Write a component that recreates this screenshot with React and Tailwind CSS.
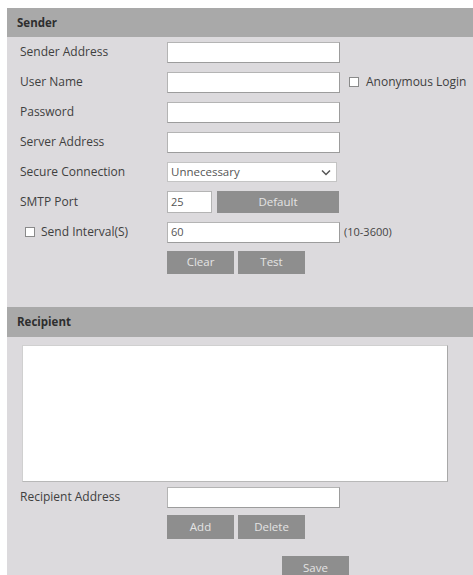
import React from 'react';

const font = { fontFamily: '"Open Sans", "Noto Sans", sans-serif' };

const Label = ({ children }) => (
  <div className="w-[160px] pl-[13px] text-[12px] text-[#404040]">{children}</div>
);

const TextInput = ({ value = '', w = 'w-[173px]' }) => (
  <div className={`${w} h-[21px] bg-white border border-[#b4b4b4] border-b-[#9c9c9c] border-r-[#9c9c9c] flex items-center px-[3px] text-[11px] text-[#555]`}>
    {value}
  </div>
);

const Btn = ({ children, w = 'w-[67px]', h = 'h-[23px]' }) => (
  <div className={`${w} ${h} bg-[#8e8e8e] flex items-center justify-center text-[11.5px] text-[#e4e4e4]`}>
    {children}
  </div>
);

const Box = () => <span className="inline-block w-[10px] h-[10px] bg-white border border-[#8a8a8a]" />;

const Header = ({ children, h = 'h-[29px]' }) => (
  <div className={`${h} bg-[#a9a9a9] flex items-center pl-[10px] text-[11.5px] font-bold text-[#2e2e2e]`}>
    {children}
  </div>
);

const Row = ({ children }) => <div className="h-[30px] flex items-center">{children}</div>;

export default function App() {
  return (
    <div className="w-[473px] h-[575px] bg-white pt-[8px] pl-[7px] overflow-hidden" style={font}>
      <div className="h-full bg-[#dcdadd]">
        <Header>Sender</Header>
        <Row>
          <Label>Sender Address</Label>
          <TextInput />
        </Row>
        <Row>
          <Label>User Name</Label>
          <TextInput />
          <div className="ml-[9px] flex items-center gap-[7px] text-[12px] text-[#404040]">
            <Box />
            Anonymous Login
          </div>
        </Row>
        <Row>
          <Label>Password</Label>
          <TextInput />
        </Row>
        <Row>
          <Label>Server Address</Label>
          <TextInput />
        </Row>
        <Row>
          <Label>Secure Connection</Label>
          <div className="w-[170px] h-[20px] bg-white border border-[#c4c4c4] flex items-center justify-between pl-[3px] pr-[5px] text-[11.5px] text-[#555]">
            Unnecessary
            <svg width="10" height="7" viewBox="0 0 10 7" fill="none" stroke="#555" strokeWidth="1.5">
              <path d="M1 1.5 L5 5.5 L9 1.5" />
            </svg>
          </div>
        </Row>
        <Row>
          <Label>SMTP Port</Label>
          <div className="w-[45px] h-[22px] bg-white border border-[#b4b4b4] flex items-center px-[3px] text-[11px] text-[#555]">25</div>
          <div className="ml-[5px]">
            <Btn w="w-[122px]" h="h-[22px]">Default</Btn>
          </div>
        </Row>
        <Row>
          <div className="w-[160px] pl-[18px] flex items-center gap-[6px] text-[12px] text-[#404040]">
            <Box />
            Send Interval(S)
          </div>
          <TextInput value="60" />
          <span className="ml-[4px] text-[11px] text-[#444]">(10-3600)</span>
        </Row>
        <Row>
          <div className="w-[160px]" />
          <div className="flex gap-[4px]">
            <Btn>Clear</Btn>
            <Btn>Test</Btn>
          </div>
        </Row>
        <div className="h-[30px]" />
        <Header h="h-[30px]">Recipient</Header>
        <div className="mt-[8px] ml-[15px] w-[426px] h-[137px] bg-white border border-[#d0d0d0] border-r-[#a8a8a8] border-b-[#b8b8b8]" />
        <Row>
          <Label>Recipient Address</Label>
          <TextInput />
        </Row>
        <Row>
          <div className="w-[160px]" />
          <div className="flex gap-[4px]">
            <Btn h="h-[24px]">Add</Btn>
            <Btn h="h-[24px]">Delete</Btn>
          </div>
        </Row>
        <div className="mt-[14px] pl-[275px]">
          <Btn h="h-[24px]">Save</Btn>
        </div>
      </div>
    </div>
  );
}
